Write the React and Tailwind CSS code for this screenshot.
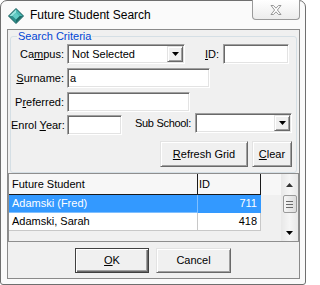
import React from 'react';

const sunken =
  'bg-white border border-t-[#a0a0a0] border-l-[#a0a0a0] border-r-white border-b-white shadow-[inset_1px_1px_0_#696969,inset_-1px_-1px_0_#e3e3e3]';
const raised =
  'bg-[#f0f0f0] border border-t-[#e3e3e3] border-l-[#e3e3e3] border-r-[#696969] border-b-[#696969] shadow-[inset_1px_1px_0_#fff,inset_-1px_-1px_0_#a0a0a0]';

const rows = [
  { name: 'Adamski (Fred)', id: 711, selected: true },
  { name: 'Adamski, Sarah', id: 418 },
];

function Gem() {
  return (
    <svg width="16" height="16" viewBox="0 0 16 16">
      <polygon points="8,0.5 15.5,8 8,15.5 0.5,8" fill="#2a8f8c" stroke="#1b5e5c" strokeWidth="1" />
      <polygon points="8,1.5 1.5,8 4.5,8 8,4.5" fill="#9be6e0" />
      <polygon points="8,1.5 14.5,8 11.5,8 8,4.5" fill="#4cbab4" />
      <polygon points="1.5,8 8,14.5 8,11.5 4.5,8" fill="#2f8f8b" />
      <polygon points="14.5,8 8,14.5 8,11.5 11.5,8" fill="#1d6a67" />
      <polygon points="8,4.5 11.5,8 8,11.5 4.5,8" fill="#63cdc6" />
    </svg>
  );
}

function DownArrow() {
  return (
    <svg width="7" height="4" viewBox="0 0 7 4">
      <polygon points="0,0 7,0 3.5,4" fill="#000" />
    </svg>
  );
}

function Combo({ w, text }) {
  return (
    <div className={`${sunken} ${w} h-[20px] flex items-center`}>
      <span className="flex-1 pl-[4px] whitespace-nowrap">{text}</span>
      <div className={`${raised} w-[16px] h-[16px] mr-[1px] flex items-center justify-center`}>
        <DownArrow />
      </div>
    </div>
  );
}

function Label({ children, className = '' }) {
  return <span className={`whitespace-nowrap ${className}`}>{children}</span>;
}

export default function App() {
  return (
    <div className="w-[306px] h-[285px] bg-white font-['Liberation_Sans',Arial,sans-serif] text-[11px] text-black">
      <div className="w-[306px] h-[285px] border border-[#6f6f6f] rounded-t-[7px] rounded-b-[3px] bg-[#fafafa] flex flex-col">
        {/* title bar */}
        <div className="h-[28px] flex items-start">
          <div className="ml-[7px] mt-[7px]">
            <Gem />
          </div>
          <span className="ml-[6px] mt-[6px] text-[12px] leading-[16px]">Future Student Search</span>
          <div className="ml-auto mr-[5px] -mt-px w-[48px] h-[20px] border border-[#9a9a9a] border-t-0 rounded-b-[4px] bg-gradient-to-b from-white to-[#ececec] flex items-center justify-center">
            <svg width="12" height="10" viewBox="0 0 12 10">
              <polygon
                points="1,0.5 3.5,0.5 6,3.2 8.5,0.5 11,0.5 7.4,5 11,9.5 8.5,9.5 6,6.8 3.5,9.5 1,9.5 4.6,5"
                fill="#fff"
                stroke="#8c8c8c"
                strokeWidth="0.9"
              />
            </svg>
          </div>
        </div>

        {/* client area */}
        <div className="ml-[6px] w-[293px] h-[250px] border border-[#8a8a8a] bg-[#f0f0f0] flex flex-col">
          <fieldset className="ml-[2px] w-[287px] border border-[#d5dfe5] rounded-[3px] pb-[5px]">
            <legend className="ml-[6px] px-[1px] text-[#0046d5] leading-[13px]">Search Criteria</legend>

            {/* campus / id */}
            <div className="mt-[1px] h-[20px] flex items-center">
              <Label className="w-[54px] text-right pr-[1px]">
                Ca<span className="underline">m</span>pus:
              </Label>
              <div className="ml-[2px]">
                <Combo w="w-[118px]" text="Not Selected" />
              </div>
              <Label className="ml-[20px]">
                <span className="underline">I</span>D:
              </Label>
              <div className={`${sunken} ml-[4px] w-[66px] h-[20px]`} />
            </div>

            {/* surname */}
            <div className="mt-[4px] h-[20px] flex items-center">
              <Label className="w-[54px] text-right pr-[1px]">
                <span className="underline">S</span>urname:
              </Label>
              <div className={`${sunken} ml-[2px] w-[143px] h-[20px] pl-[2px] flex items-center`}>a</div>
            </div>

            {/* preferred */}
            <div className="mt-[4px] h-[20px] flex items-center">
              <Label className="w-[54px] text-right pr-[1px]">
                P<span className="underline">r</span>eferred:
              </Label>
              <div className={`${sunken} ml-[2px] w-[123px] h-[20px]`} />
            </div>

            {/* enrol year / sub school */}
            <div className="mt-[1px] h-[22px] flex items-start pr-[4px]">
              <Label className="w-[54px] text-right pr-[1px] mt-[4px] leading-[16px]">
                Enrol <span className="underline">Y</span>ear:
              </Label>
              <div className={`${sunken} ml-[2px] mt-[2px] w-[55px] h-[20px]`} />
              <Label className="ml-[13px] mt-[2px] leading-[16px] tracking-[-0.3px]">Sub School:</Label>
              <div className="ml-auto">
                <Combo w="w-[97px]" text="" />
              </div>
            </div>

            {/* buttons */}
            <div className="mt-[6px] h-[26px] flex justify-end gap-[4px] pr-[4px]">
              <div className={`${raised} w-[88px] h-[26px] flex items-center justify-center`}>
                <span>
                  <span className="underline">R</span>efresh Grid
                </span>
              </div>
              <div className={`${raised} w-[40px] h-[26px] flex items-center justify-center`}>
                <span>
                  <span className="underline">C</span>lear
                </span>
              </div>
            </div>
          </fieldset>

          {/* grid */}
          <div className="h-[69px] border border-[#8e8e8e] bg-[#f0f0f0] flex">
            <div className="flex-1 flex flex-col">
              <div className="h-[21px] flex bg-[#f7f7f7]">
                <div className="w-[189px] border-r border-b border-[#1a1a1a] pl-[3px] flex items-center">Future Student</div>
                <div className="w-[63px] border-r border-b border-[#1a1a1a] pl-[1px] flex items-center">ID</div>
                <div className="flex-1" />
              </div>
              {rows.map((r) => (
                <div key={r.id} className="h-[18px] flex">
                  <div
                    className={`w-[189px] border-r border-b pl-[3px] flex items-center ${
                      r.selected ? 'bg-[#3399ff] text-white border-[#7fbfff]' : 'bg-white border-[#c8c8c8]'
                    }`}
                  >
                    {r.name}
                  </div>
                  <div
                    className={`w-[63px] border-r border-b pr-[3px] flex items-center justify-end ${
                      r.selected ? 'bg-[#3399ff] text-white border-[#3399ff]' : 'bg-white border-[#c8c8c8]'
                    }`}
                  >
                    {r.id}
                  </div>
                </div>
              ))}
            </div>

            {/* scrollbar */}
            <div className="w-[17px] bg-gradient-to-r from-[#e8e8e8] via-[#f5f5f5] to-[#e8e8e8] flex flex-col items-center">
              <div className="h-[20px] flex items-center justify-center pt-[2px]">
                <svg width="7" height="4" viewBox="0 0 7 4">
                  <polygon points="3.5,0 7,4 0,4" fill="#333" />
                </svg>
              </div>
              <div className="mt-[1px] w-[14px] h-[18px] border border-[#9a9a9a] rounded-[2px] bg-gradient-to-r from-[#f6f6f6] to-[#dcdcdc] flex flex-col items-center justify-center gap-[2px]">
                <div className="w-[7px] h-px bg-[#6a6a6a]" />
                <div className="w-[7px] h-px bg-[#6a6a6a]" />
                <div className="w-[7px] h-px bg-[#6a6a6a]" />
              </div>
              <div className="flex-1" />
              <div className="h-[16px] flex items-center justify-center">
                <DownArrow />
              </div>
            </div>
          </div>

          {/* ok / cancel */}
          <div className="mt-[6px] h-[25px] flex">
            <div className="ml-[67px] w-[74px] h-[25px] border border-[#404040] bg-[#f0f0f0] shadow-[inset_1px_1px_0_#fff,inset_-1px_-1px_0_#696969,inset_-2px_-2px_0_#a0a0a0] flex items-center justify-center">
              <span>
                <span className="underline">O</span>K
              </span>
            </div>
            <div className={`${raised} ml-[7px] w-[75px] h-[25px] flex items-center justify-center`}>Cancel</div>
          </div>
        </div>
      </div>
    </div>
  );
}
